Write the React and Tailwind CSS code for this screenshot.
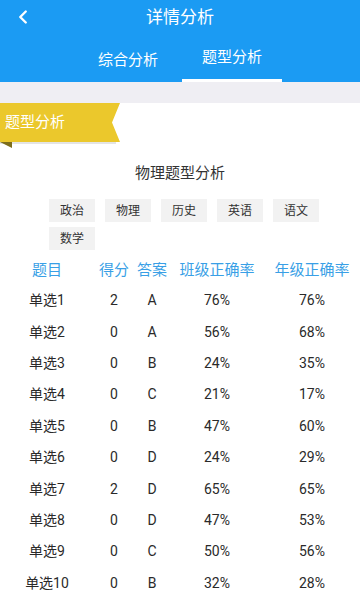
import React from 'react';
import { ChevronLeft } from 'lucide-react';

const subjects = ['政治', '物理', '历史', '英语', '语文', '数学'];

const rows = [
  ['单选1', '2', 'A', '76%', '76%'],
  ['单选2', '0', 'A', '56%', '68%'],
  ['单选3', '0', 'B', '24%', '35%'],
  ['单选4', '0', 'C', '21%', '17%'],
  ['单选5', '0', 'B', '47%', '60%'],
  ['单选6', '0', 'D', '24%', '29%'],
  ['单选7', '2', 'D', '65%', '65%'],
  ['单选8', '0', 'D', '47%', '53%'],
  ['单选9', '0', 'C', '50%', '56%'],
  ['单选10', '0', 'B', '32%', '28%'],
];

const cols = ['w-[94px]', 'w-[40px]', 'w-[36px]', 'w-[94px]', 'w-[96px]'];

const App = () => {
  return (
    <div className="w-[360px] h-[590px] overflow-hidden bg-white font-['Roboto','Noto_Sans_CJK_SC',sans-serif]">
      {/* top bar */}
      <div className="bg-[#1b9bf3] text-white">
        <div className="relative h-[36px] flex items-center justify-center">
          <ChevronLeft className="absolute left-[12px] top-[6px]" size={22} strokeWidth={2.6} />
          <span className="text-[17px]">详情分析</span>
        </div>
        <div className="flex h-[46px] pl-[78px]">
          <div className="w-[100px] flex items-center justify-center text-[15px] pt-[2px]">综合分析</div>
          <div className="w-[100px] ml-[4px] flex flex-col">
            <div className="flex-1 flex items-center justify-center text-[15px]">题型分析</div>
            <div className="h-[3px] bg-white" />
          </div>
        </div>
      </div>
      <div className="h-[21px] bg-[#efeef3]" />

      {/* ribbon */}
      <div className="w-[120px]">
        <div className="h-[39px] bg-[#ebc82c] [clip-path:polygon(0_0,100%_0,calc(100%-8px)_50%,100%_100%,0_100%)] flex items-center pl-[5px] text-white text-[15px]">
          题型分析
        </div>
        <div className="h-[2px] w-[116px] bg-[#e4e4e4]" />
        <div className="h-[6px] w-[12px] bg-[#7d6d1c] [clip-path:polygon(0_0,100%_0,100%_100%)] -mt-[2px]" />
      </div>

      <div className="mt-[15px] text-center text-[15px] text-[#333] leading-[20px]">物理题型分析</div>

      <div className="mt-[16px] pl-[49px] w-[330px] flex flex-wrap gap-x-[10px] gap-y-[5px]">
        {subjects.map((s) => (
          <div key={s} className="w-[46px] h-[23px] bg-[#f2f2f2] flex items-center justify-center text-[12px] text-[#333]">
            {s}
          </div>
        ))}
      </div>

      <div className="mt-[5px] flex h-[30px] items-center text-[15px] text-[#399fe6]">
        {['题目', '得分', '答案', '班级正确率', '年级正确率'].map((h, i) => (
          <div key={h} className={`${cols[i]} text-center`}>{h}</div>
        ))}
      </div>

      {rows.map((r) => (
        <div key={r[0]} className="flex h-[31.4px] items-center text-[14px] text-[#2a2a2a]">
          {r.map((c, i) => (
            <div key={i} className={`${cols[i]} text-center`}>{c}</div>
          ))}
        </div>
      ))}
    </div>
  );
};

export default App;
